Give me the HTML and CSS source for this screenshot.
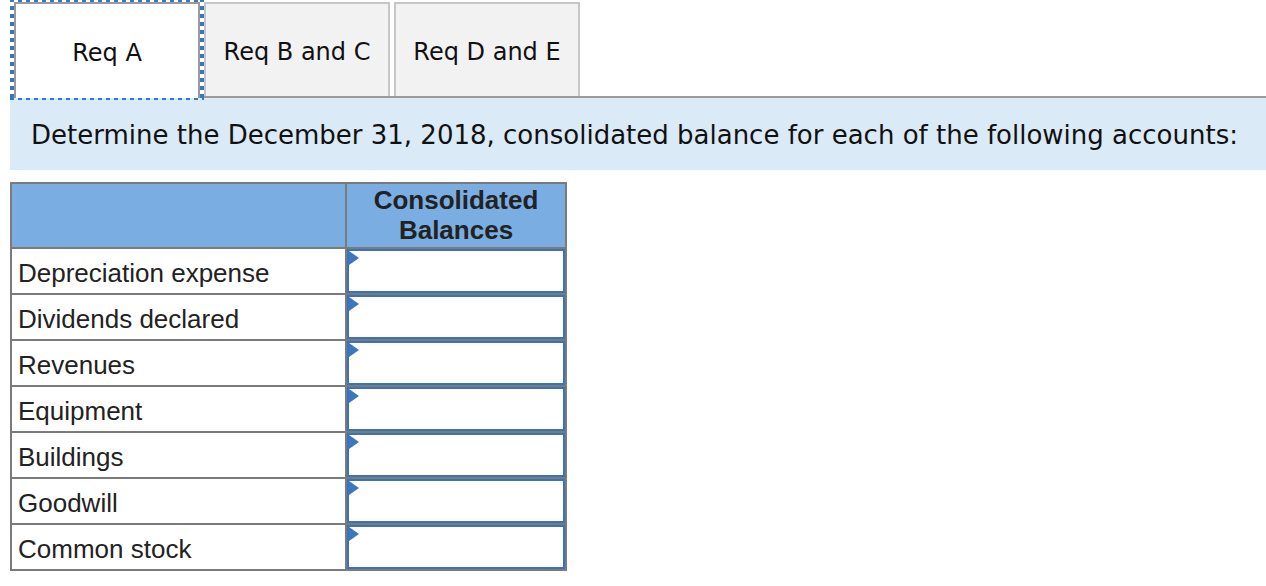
FILE: index.html
```html
<!DOCTYPE html>
<html>
<head>
<meta charset="utf-8">
<link rel="stylesheet" href="styles.css">
</head>
<body>
<div class="page">
  <div class="tabs">
    <div class="tab tab-active">Req A</div>
    <div class="tab">Req B and C</div>
    <div class="tab">Req D and E</div>
  </div>
  <div class="panel">Determine the December 31, 2018, consolidated balance for each of the following accounts:</div>
  <div class="grid">
    <div class="head"></div>
    <div class="head head-text">Consolidated<br>Balances</div>
    <div class="label">Depreciation expense</div>
    <div class="cell"><div class="input"></div></div>
    <div class="label">Dividends declared</div>
    <div class="cell"><div class="input"></div></div>
    <div class="label">Revenues</div>
    <div class="cell"><div class="input"></div></div>
    <div class="label">Equipment</div>
    <div class="cell"><div class="input"></div></div>
    <div class="label">Buildings</div>
    <div class="cell"><div class="input"></div></div>
    <div class="label">Goodwill</div>
    <div class="cell"><div class="input"></div></div>
    <div class="label">Common stock</div>
    <div class="cell"><div class="input"></div></div>
  </div>
</div>
</body>
</html>
```
FILE: styles.css
```css
html, body {
  margin: 0;
  padding: 0;
  background: #ffffff;
}
.page {
  padding-left: 10px;
}
.tabs {
  display: flex;
  align-items: flex-end;
  padding-top: 2px;
  height: 94px;
}
.tab {
  box-sizing: border-box;
  height: 94px;
  width: 186px;
  margin-right: 4px;
  background: #f2f2f2;
  border: 2px solid #c6c6c6;
  border-bottom: none;
  display: flex;
  align-items: center;
  justify-content: center;
  padding-top: 4px;
  font-family: "DejaVu Sans", Verdana, sans-serif;
  font-size: 24px;
  color: #111111;
}
.tab-active {
  position: relative;
  z-index: 2;
  width: 186px;
  height: 96px;
  margin-left: 4px;
  margin-right: 4px;
  margin-bottom: -2px;
  background: #ffffff;
  border-color: #9a9a9a;
}
.tab-active::after {
  content: "";
  position: absolute;
  left: -6px;
  right: -6px;
  top: -6px;
  bottom: -2px;
  pointer-events: none;
  background:
    repeating-linear-gradient(90deg, #3b76c2 0 4px, transparent 4px 8px) top left / 100% 4px no-repeat,
    repeating-linear-gradient(90deg, #3b76c2 0 4px, transparent 4px 8px) bottom left / 100% 2px no-repeat,
    repeating-linear-gradient(180deg, #3b76c2 0 4px, transparent 4px 8px) top left / 4px 100% no-repeat,
    repeating-linear-gradient(180deg, #3b76c2 0 4px, transparent 4px 8px) top right / 4px 100% no-repeat;
}
.panel {
  box-sizing: border-box;
  border-top: 2px solid #9a9a9a;
  background: #dbeaf7;
  height: 74px;
  display: flex;
  align-items: center;
  padding-left: 21px;
  padding-top: 1px;
  font-family: "DejaVu Sans", Verdana, sans-serif;
  font-size: 26px;
  color: #111111;
}
.grid {
  margin-top: 12px;
  display: grid;
  grid-template-columns: 333px 218px;
  grid-template-rows: 63px repeat(7, 44px);
  gap: 2px;
  padding: 2px;
  background: #7b7b7b;
  width: max-content;
  font-family: "Liberation Sans", Arial, sans-serif;
  font-size: 26px;
  color: #222222;
}
.head {
  background: #7aade2;
}
.head-text {
  font-weight: bold;
  text-align: center;
  line-height: 30px;
  padding-top: 1px;
}
.label {
  background: #ffffff;
  display: flex;
  align-items: center;
  padding-left: 6px;
  padding-top: 4px;
}
.cell {
  background: #ffffff;
  position: relative;
}
.input {
  box-sizing: border-box;
  width: 100%;
  height: 100%;
  border: 2px solid #3b73b9;
  background: #ffffff;
  position: relative;
}
.input::before {
  content: "";
  position: absolute;
  left: 0;
  top: 0;
  border-top: 7px solid transparent;
  border-bottom: 7px solid transparent;
  border-left: 10px solid #3b76c0;
}
```
